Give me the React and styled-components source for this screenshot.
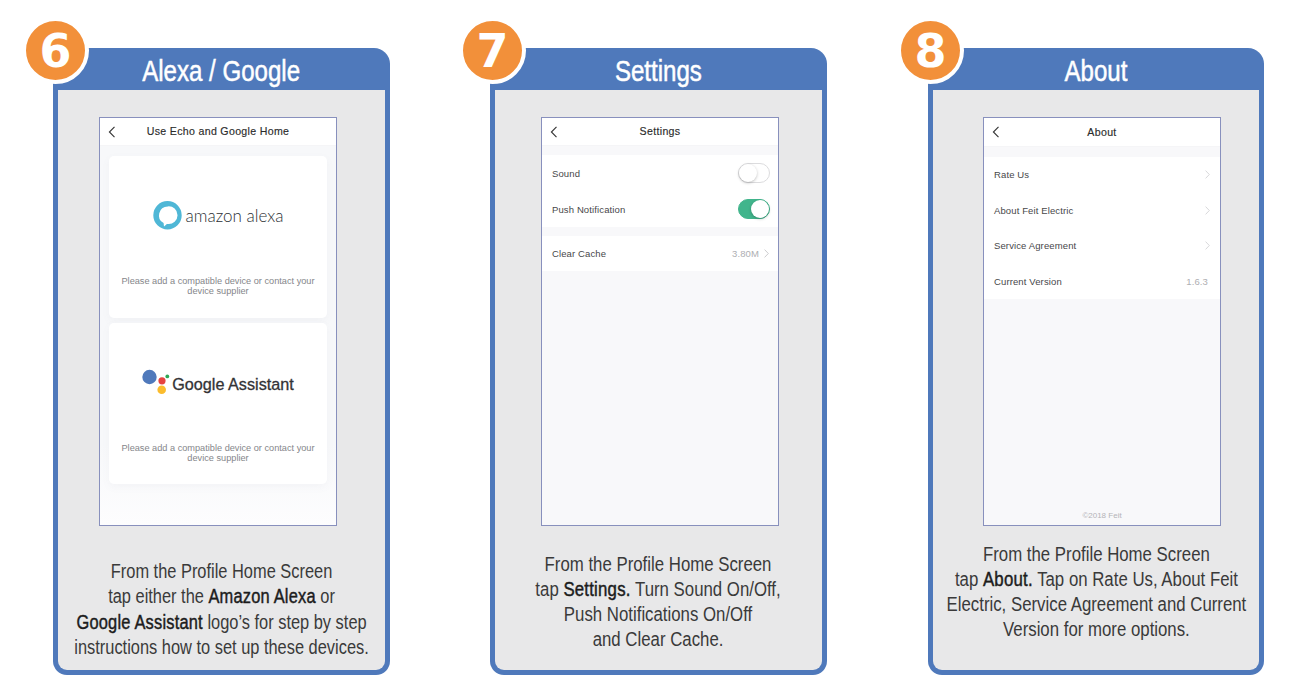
import React from "react";
import styled, { createGlobalStyle } from "styled-components";

const Global = createGlobalStyle`
  html, body { margin: 0; padding: 0; background: #fff; }
  body { font-family: "Liberation Sans", Arial, sans-serif; }
`;

const Page = styled.div`
  width: 1297px;
  height: 684px;
  box-sizing: border-box;
  padding: 48px 0 0 53px;
  display: flex;
  gap: 100px;
  overflow: hidden;
`;

const Card = styled.section`
  position: relative;
  width: ${(p) => p.$w || 337}px;
  height: 627px;
  flex: none;
  margin-left: ${(p) => p.$shift || 0}px;
  box-sizing: border-box;
  padding: 0 5px 5px;
  background: #4f79bb;
  border-radius: 16px 16px 14px 14px;
  display: flex;
  flex-direction: column;
`;

const Badge = styled.div`
  position: absolute;
  left: -31px;
  top: -31px;
  width: 59px;
  height: 59px;
  border: 4px solid #fff;
  border-radius: 50%;
  background: #f2903a;
  color: #fff;
  display: flex;
  align-items: center;
  justify-content: center;
  font: 700 46px/1 "DejaVu Sans", sans-serif;
`;

const Header = styled.div`
  height: 42px;
  flex: none;
  display: flex;
  align-items: center;
  justify-content: center;
  padding-top: 4px;
  box-sizing: border-box;
`;

const Title = styled.h2`
  margin: 0;
  color: #fff;
  white-space: nowrap;
  font: 400 29px/1 "Liberation Sans", Arial, sans-serif;
  -webkit-text-stroke: 0.5px #fff;
  transform: scaleX(0.83);
`;

const Body = styled.div`
  flex: 1;
  min-height: 0;
  background: #e8e8e9;
  border-radius: 0 0 9px 9px;
  padding-top: 27px;
  display: flex;
  flex-direction: column;
`;

const Phone = styled.div`
  width: 238px;
  height: 409px;
  flex: none;
  box-sizing: border-box;
  margin-left: ${(p) => p.$left}px;
  border: 1px solid #8890bd;
  background: ${(p) => (p.$fade ? "linear-gradient(#f7f8fa 80%, #fdfdfe)" : "#f8f8fa")};
  display: flex;
  flex-direction: column;
  overflow: hidden;
`;

const NavBar = styled.div`
  position: relative;
  height: ${(p) => p.$h || 28}px;
  flex: none;
  background: #fff;
  display: flex;
  align-items: center;
  justify-content: center;
  padding-bottom: ${(p) => p.$lift ?? 2}px;
  font-size: 10.6px;
  letter-spacing: 0.32px;
  color: #2b2b2b;
  -webkit-text-stroke: 0.15px #2b2b2b;
  border-bottom: 1px solid #f5f5f7;
  box-sizing: border-box;
`;

const BackIcon = styled.svg`
  position: absolute;
  left: 8px;
  top: 8px;
  width: 8px;
  height: 12px;
`;

const Back = () => (
  <BackIcon viewBox="0 0 8 12" fill="none" stroke="#333" strokeWidth="1.1">
    <path d="M6.5 .8 1.4 6l5.1 5.2" />
  </BackIcon>
);

const ChevronIcon = styled.svg`
  width: 5px;
  height: 9px;
  flex: none;
`;

const Chevron = ({ color = "#c6c6c8" }) => (
  <ChevronIcon viewBox="0 0 5 9" fill="none" stroke={color} strokeWidth="0.9">
    <path d="M.6.6 4.3 4.5.6 8.4" />
  </ChevronIcon>
);

const Stack = styled.div`
  padding: 10px 9px 0;
  display: flex;
  flex-direction: column;
  gap: 5px;
`;

const ServiceCard = styled.div`
  height: ${(p) => p.$h}px;
  box-sizing: border-box;
  background: #fff;
  border-radius: 5px;
  box-shadow: 0 3px 8px rgba(120, 125, 140, 0.05);
  display: flex;
  flex-direction: column;
  align-items: center;
`;

const LogoArea = styled.div`
  height: 118px;
  margin-bottom: 2px;
  flex: none;
  display: flex;
  align-items: center;
  justify-content: center;
`;

const AlexaName = styled.span`
  font: 300 17px/1 Lato, sans-serif;
  color: #2c3033;
  margin-left: 4px;
`;

const GoogleName = styled.span`
  font: 400 16.2px/1 "Liberation Sans", Arial, sans-serif;
  color: #333336;
  -webkit-text-stroke: 0.3px #333336;
  padding-top: 5px;
`;

const Hint = styled.p`
  margin: 0;
  width: 204px;
  text-align: center;
  font-size: 9.2px;
  line-height: 10.3px;
  color: #85868a;
`;

const Group = styled.div`
  margin-top: ${(p) => p.$top}px;
  background: #fff;
  display: flex;
  flex-direction: column;
`;

const Row = styled.div`
  height: ${(p) => p.$h}px;
  box-sizing: border-box;
  padding: 0 ${(p) => p.$right ?? 9}px 0 10px;
  display: flex;
  align-items: center;
  justify-content: space-between;
  font-size: 9.5px;
  letter-spacing: 0.12px;
  color: #47474a;
`;

const Meta = styled.span`
  display: flex;
  align-items: center;
  gap: 5px;
  color: #aeaeb2;
`;

const Toggle = styled.span`
  position: relative;
  display: block;
  width: 32px;
  height: 20px;
  box-sizing: border-box;
  border-radius: 10px;
  background: ${(p) => (p.$on ? "#41b58c" : "#fff")};
  border: 1px solid ${(p) => (p.$on ? "#41b58c" : "#dcdcde")};
  &::after {
    content: "";
    position: absolute;
    top: 0;
    ${(p) => (p.$on ? "right: 0;" : "left: 0;")}
    width: 18px;
    height: 18px;
    border-radius: 50%;
    background: #fff;
    box-shadow: 0 1px 3px rgba(0, 0, 0, 0.25);
  }
`;

const Footer = styled.div`
  margin-top: auto;
  padding-bottom: 5px;
  text-align: center;
  font-size: 8px;
  line-height: 8px;
  color: #b4b4b8;
`;

const Caption = styled.p`
  align-self: center;
  margin: ${(p) => p.$top}px 0 0;
  text-align: center;
  font: 400 20px/25.3px "Liberation Sans", Arial, sans-serif;
  color: #3a3a3a;
  white-space: nowrap;
  transform: scaleX(${(p) => p.$sx});
  b {
    font-weight: 400;
    letter-spacing: 0.25px;
    color: #1c1c1c;
    -webkit-text-stroke: 0.45px #1c1c1c;
  }
`;

const AlexaLogo = () => (
  <svg width="29" height="30" viewBox="0 0 29 30">
    <path
      fillRule="evenodd"
      fill="#4fb7d6"
      d="M14.5 1a14.2 14.2 0 1 1 0 28.4 14.2 14.2 0 0 1 0-28.4Zm.3 5.4a8.9 8.9 0 0 0-4.2 16.7l.4 3.3 2.9-2.5h.9a8.8 8.8 0 1 0 0-17.5Z"
    />
  </svg>
);

const GoogleDots = () => (
  <svg width="30" height="26" viewBox="0 0 30 26">
    <circle cx="7.5" cy="8" r="7.2" fill="#4f79bb" />
    <circle cx="20" cy="11.8" r="3.6" fill="#e64340" />
    <circle cx="25.3" cy="7.4" r="1.9" fill="#2fa855" />
    <circle cx="19.7" cy="20.8" r="4.3" fill="#fbbc2d" />
  </svg>
);

export default function App() {
  return (
    <Page>
      <Global />
      <Card>
        <Badge>6</Badge>
        <Header>
          <Title>Alexa / Google</Title>
        </Header>
        <Body>
          <Phone $left={41} $fade>
            <NavBar>
              <Back />
              Use Echo and Google Home
            </NavBar>
            <Stack>
              <ServiceCard $h={162}>
                <LogoArea>
                  <AlexaLogo />
                  <AlexaName>amazon alexa</AlexaName>
                </LogoArea>
                <Hint>Please add a compatible device or contact your device supplier</Hint>
              </ServiceCard>
              <ServiceCard $h={161}>
                <LogoArea>
                  <GoogleDots />
                  <GoogleName>Google Assistant</GoogleName>
                </LogoArea>
                <Hint>Please add a compatible device or contact your device supplier</Hint>
              </ServiceCard>
            </Stack>
          </Phone>
          <Caption $top={33} $sx={0.82}>
            From the Profile Home Screen
            <br />
            tap either the <b>Amazon Alexa</b> or
            <br />
            <b>Google Assistant</b> logo’s for step by step
            <br />
            instructions how to set up these devices.
          </Caption>
        </Body>
      </Card>

      <Card>
        <Badge>7</Badge>
        <Header>
          <Title>Settings</Title>
        </Header>
        <Body>
          <Phone $left={46}>
            <NavBar>
              <Back />
              Settings
            </NavBar>
            <Group $top={9}>
              <Row $h={36} $right={8}>
                Sound
                <Toggle />
              </Row>
              <Row $h={36} $right={8}>
                Push Notification
                <Toggle $on />
              </Row>
            </Group>
            <Group $top={9}>
              <Row $h={35}>
                Clear Cache
                <Meta>
                  3.80M <Chevron />
                </Meta>
              </Row>
            </Group>
          </Phone>
          <Caption $top={25.5} $sx={0.84}>
            From the Profile Home Screen
            <br />
            tap <b>Settings.</b> Turn Sound On/Off,
            <br />
            Push Notifications On/Off
            <br />
            and Clear Cache.
          </Caption>
        </Body>
      </Card>

      <Card $w={336} $shift={1}>
        <Badge>8</Badge>
        <Header>
          <Title>About</Title>
        </Header>
        <Body>
          <Phone $left={50}>
            <NavBar $h={29} $lift={0}>
              <Back />
              About
            </NavBar>
            <Group $top={10}>
              <Row $h={35.5} $right={10}>
                Rate Us
                <Chevron color="#d4d4d6" />
              </Row>
              <Row $h={35.5} $right={10}>
                About Feit Electric
                <Chevron color="#d4d4d6" />
              </Row>
              <Row $h={35.5} $right={10}>
                Service Agreement
                <Chevron color="#d4d4d6" />
              </Row>
              <Row $h={35.5} $right={12}>
                Current Version
                <Meta>1.6.3</Meta>
              </Row>
            </Group>
            <Footer>©2018 Feit</Footer>
          </Phone>
          <Caption $top={15.5} $sx={0.84}>
            From the Profile Home Screen
            <br />
            tap <b>About.</b> Tap on Rate Us, About Feit
            <br />
            Electric, Service Agreement and Current
            <br />
            Version for more options.
          </Caption>
        </Body>
      </Card>
    </Page>
  );
}
